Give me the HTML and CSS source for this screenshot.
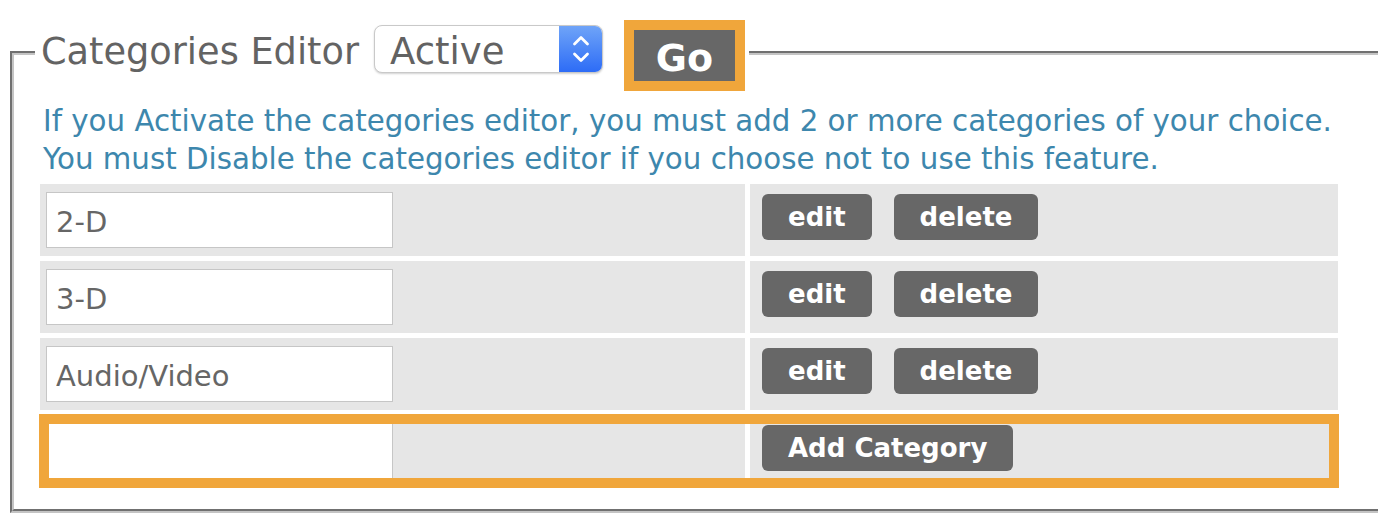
FILE: index.html
```html
<!DOCTYPE html>
<html>
<head>
<meta charset="utf-8">
<title>Categories Editor</title>
<link rel="stylesheet" href="styles.css">
</head>
<body>
<fieldset class="editor">
  <legend class="legend">
    <span class="legend-title">Categories Editor</span>
    <div class="select">
      <span class="select-value">Active</span>
      <span class="select-stepper">
        <svg width="22" height="36" viewBox="0 0 22 36">
          <path d="M4.5 13 L11 6.5 L17.5 13" fill="none" stroke="#fff" stroke-width="2.8" stroke-linecap="round" stroke-linejoin="round"/>
          <path d="M4.5 23 L11 29.5 L17.5 23" fill="none" stroke="#fff" stroke-width="2.8" stroke-linecap="round" stroke-linejoin="round"/>
        </svg>
      </span>
    </div>
    <button class="go-btn" type="button">Go</button>
  </legend>
  <div class="note">If you Activate the categories editor, you must add 2 or more categories of your choice.<br>You must Disable the categories editor if you choose not to use this feature.</div>
  <div class="rows">
    <div class="row">
      <div class="cell cell-name"><input class="name-input" type="text" value="2-D"></div>
      <div class="cell cell-actions"><button class="btn" type="button">edit</button><button class="btn" type="button">delete</button></div>
    </div>
    <div class="row">
      <div class="cell cell-name"><input class="name-input" type="text" value="3-D"></div>
      <div class="cell cell-actions"><button class="btn" type="button">edit</button><button class="btn" type="button">delete</button></div>
    </div>
    <div class="row">
      <div class="cell cell-name"><input class="name-input" type="text" value="Audio/Video"></div>
      <div class="cell cell-actions"><button class="btn" type="button">edit</button><button class="btn" type="button">delete</button></div>
    </div>
    <div class="row row-new">
      <div class="cell cell-name"><input class="name-input" type="text" value=""></div>
      <div class="cell cell-actions"><button class="btn" type="button">Add Category</button></div>
    </div>
  </div>
</fieldset>
</body>
</html>
```
FILE: styles.css
```css
html, body {
  margin: 0;
  padding: 0;
  background: #fff;
  overflow: hidden;
}

body {
  font-family: "DejaVu Sans", Verdana, sans-serif;
  color: #666;
}

.editor {
  margin: 25px 0 0 10px;
  padding: 0 60px 17px 21px;
  border: 4px groove #c4c4c4;
  width: 1308px;
  box-sizing: content-box;
  min-width: 0;
}

.legend {
  display: flex;
  align-items: flex-start;
  padding: 0 14px 0 6px;
}

.legend-title {
  font-size: 36.7px;
  line-height: 44px;
  margin-top: 5px;
  color: #636363;
  white-space: nowrap;
}

.select {
  display: flex;
  margin-left: 15px;
  width: 229px;
  height: 48px;
  box-sizing: border-box;
  border: 1px solid #c9c9c9;
  border-radius: 8px;
  background: #fff;
  box-shadow: 0 1px 2px rgba(0, 0, 0, 0.18);
  overflow: hidden;
}

.select-value {
  flex: 1;
  font-size: 37px;
  line-height: 42px;
  padding: 5px 0 0 15px;
  color: #626262;
}

.select-stepper {
  width: 43px;
  display: flex;
  align-items: center;
  justify-content: center;
  background: linear-gradient(#6fa4f8, #2d6cf6);
}

.go-btn {
  margin: 5px 0 0 31px;
  width: 101px;
  height: 51px;
  padding: 6px 0 0;
  border: 0;
  background: #676767;
  color: #fff;
  font-family: "DejaVu Sans", Verdana, sans-serif;
  font-weight: bold;
  font-size: 38px;
  line-height: 45px;
  outline: 10px solid #f0a63b;
}

.note {
  margin-top: 21px;
  padding-left: 8px;
  font-size: 29.3px;
  line-height: 38px;
  color: #3d87ad;
  white-space: nowrap;
}

.rows {
  display: flex;
  flex-direction: column;
  gap: 5px;
  padding: 6px 5px 5px;
}

.row {
  display: grid;
  grid-template-columns: 705px 588px;
  gap: 5px;
}

.cell {
  background: #e6e6e6;
  box-sizing: border-box;
  height: 72px;
}

.cell-name {
  padding: 8px 6px;
}

.name-input {
  display: block;
  width: 347px;
  height: 56px;
  box-sizing: border-box;
  margin: 0;
  padding: 3px 9px 0;
  border: 1px solid #c6c6c6;
  background: #fff;
  font-family: "DejaVu Sans", Verdana, sans-serif;
  font-size: 29px;
  color: #666;
  outline: none;
}

.cell-actions {
  display: flex;
  align-items: flex-start;
  gap: 22px;
  padding: 10px 12px;
}

.btn {
  height: 46px;
  padding: 0 26px;
  border: 0;
  border-radius: 6px;
  background: #676767;
  color: #fff;
  font-family: "DejaVu Sans", Verdana, sans-serif;
  font-weight: bold;
  font-size: 26px;
  line-height: 46px;
  white-space: nowrap;
}

.row-new {
  outline: 10px solid #f0a63b;
  outline-offset: -9px;
  position: relative;
}
```
